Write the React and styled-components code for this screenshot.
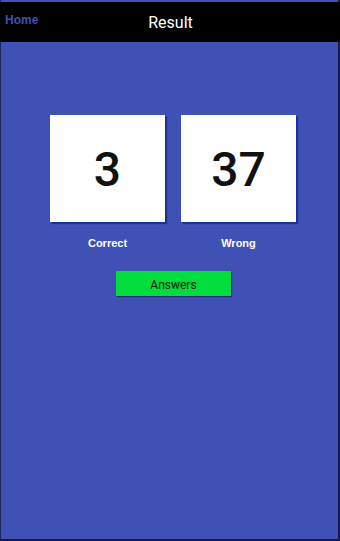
import React from 'react';
import styled, { createGlobalStyle } from 'styled-components';

const GlobalStyle = createGlobalStyle`
  html, body {
    margin: 0;
    padding: 0;
    background: #0d1230;
  }
  body {
    font-family: Roboto, "Liberation Sans", Arial, sans-serif;
  }
`;

const results = [
  { label: 'Correct', value: 3 },
  { label: 'Wrong', value: 37 }
];

const Frame = styled.div`
  box-sizing: border-box;
  width: 340px;
  height: 541px;
  padding-top: 2px;
  background: #3f51b5;
  border-left: 1px solid #1c2660;
  border-right: 2px solid #141b45;
  border-bottom: 2px solid #141b45;
  display: flex;
  flex-direction: column;
`;

const Header = styled.div`
  position: relative;
  height: 40px;
  margin-left: -1px;
  margin-right: -2px;
  background: #000;
  display: flex;
  align-items: center;
  justify-content: center;
`;

const HomeLink = styled.span`
  position: absolute;
  left: 5px;
  top: 11px;
  font-family: "Liberation Sans", Arial, sans-serif;
  font-size: 12px;
  font-weight: bold;
  color: #3f51b5;
`;

const Title = styled.h1`
  margin: 0;
  font-family: Roboto, "Liberation Sans", sans-serif;
  font-size: 16px;
  font-weight: 400;
  color: #fff;
  padding-left: 1px;
`;

const Content = styled.div`
  display: flex;
  flex-direction: column;
  align-items: flex-start;
  padding: 73px 0 0 49px;
`;

const ScoreRow = styled.div`
  display: grid;
  grid-template-columns: 115px 115px;
  column-gap: 16px;
`;

const ScoreColumn = styled.div`
  display: flex;
  flex-direction: column;
  align-items: center;
`;

const Card = styled.div`
  box-sizing: border-box;
  width: 115px;
  height: 107px;
  padding-top: 3px;
  background: #fff;
  box-shadow: 1px 1px 0 #1530a8, 2px 2px 1px rgba(10, 20, 90, 0.5);
  display: flex;
  align-items: center;
  justify-content: center;
  font-family: Roboto, "Liberation Sans", sans-serif;
  font-size: 48px;
  line-height: 1;
  font-weight: 500;
  color: #111;
`;

const Label = styled.div`
  margin-top: 15px;
  font-family: "Liberation Sans", Arial, sans-serif;
  font-size: 11px;
  font-weight: bold;
  color: #fff;
`;

const AnswersButton = styled.button`
  margin: 22px 0 0 66px;
  width: 115px;
  height: 25px;
  border: none;
  background: #00dd3c;
  box-shadow: 1px 1px 1px rgba(10, 20, 70, 0.6);
  font-family: Roboto, "Liberation Sans", sans-serif;
  font-size: 12px;
  padding: 2px 0 0;
  color: #0a1a0a;
  cursor: pointer;
`;

export default function App() {
  return (
    <>
      <GlobalStyle />
      <Frame>
        <Header>
          <HomeLink>Home</HomeLink>
          <Title>Result</Title>
        </Header>
        <Content>
          <ScoreRow>
            {results.map(r => (
              <ScoreColumn key={r.label}>
                <Card>{r.value}</Card>
                <Label>{r.label}</Label>
              </ScoreColumn>
            ))}
          </ScoreRow>
          <AnswersButton>Answers</AnswersButton>
        </Content>
      </Frame>
    </>
  );
}
